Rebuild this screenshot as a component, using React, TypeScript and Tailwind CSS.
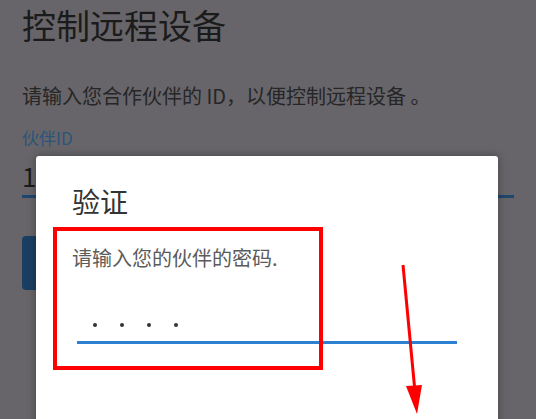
const cjk = { fontFamily: '"Noto Sans CJK SC", "Noto Sans", sans-serif' };

function PageBehind() {
  return (
    <div className="px-[22px]" style={cjk}>
      <h1 className="pt-[2px] text-[34px] leading-[46px] text-[#1b1b1c]">控制远程设备</h1>
      <p className="mt-[34px] text-[20px] leading-[28px] text-[#262627]">
        请输入您合作伙伴的 ID，以便控制远程设备 。
      </p>
      <label className="mt-[16px] block text-[17px] leading-[24px] text-[#2b5478]">伙伴ID</label>
      <div className="mt-[9px] border-b-[3px] border-[#1f466d] pb-[2px] text-[26px] leading-[34px] text-[#1b1b1c]">
        1056 783 201
      </div>
      <button className="mt-[38px] h-[54px] w-[200px] rounded-[4px] bg-[#1b3f63]" />
    </div>
  );
}

function VerifyDialog() {
  return (
    <div
      className="absolute left-[36px] top-[156px] h-[300px] w-[462px] rounded-[3px] bg-white shadow-[0_0_8px_rgba(0,0,0,0.35)]"
      style={cjk}
    >
      <div className="px-[36px] pt-[26px]">
        <h2 className="text-[28px] leading-[38px] text-[#333333]">验证</h2>
        <p className="mt-[24px] text-[20px] leading-[28px] text-[#5b5b5b]">请输入您的伙伴的密码.</p>
        <div className="ml-[5px] mt-[37px] w-[380px] border-b-[3px] border-[#2b80d2]">
          <div className="flex h-[32px] items-center gap-[23px] pl-[16px]">
            <span className="h-[4px] w-[4px] rounded-full bg-[#333]" />
            <span className="h-[4px] w-[4px] rounded-full bg-[#333]" />
            <span className="h-[4px] w-[4px] rounded-full bg-[#333]" />
            <span className="h-[4px] w-[4px] rounded-full bg-[#333]" />
          </div>
        </div>
      </div>
    </div>
  );
}

export default function App() {
  return (
    <div className="relative h-[419px] w-[536px] overflow-hidden bg-[#676569]">
      <PageBehind />
      <VerifyDialog />

      {/* annotations */}
      <div className="absolute left-[53px] top-[227px] h-[143px] w-[270px] border-[4px] border-[#ff0000]" />
      <svg className="absolute left-0 top-0" width="536" height="419" viewBox="0 0 536 419">
        <line x1="403" y1="265" x2="415" y2="392" stroke="#ff0000" strokeWidth="3" />
        <polygon points="406,386 422,385 417,414" fill="#ff0000" />
      </svg>
    </div>
  );
}
